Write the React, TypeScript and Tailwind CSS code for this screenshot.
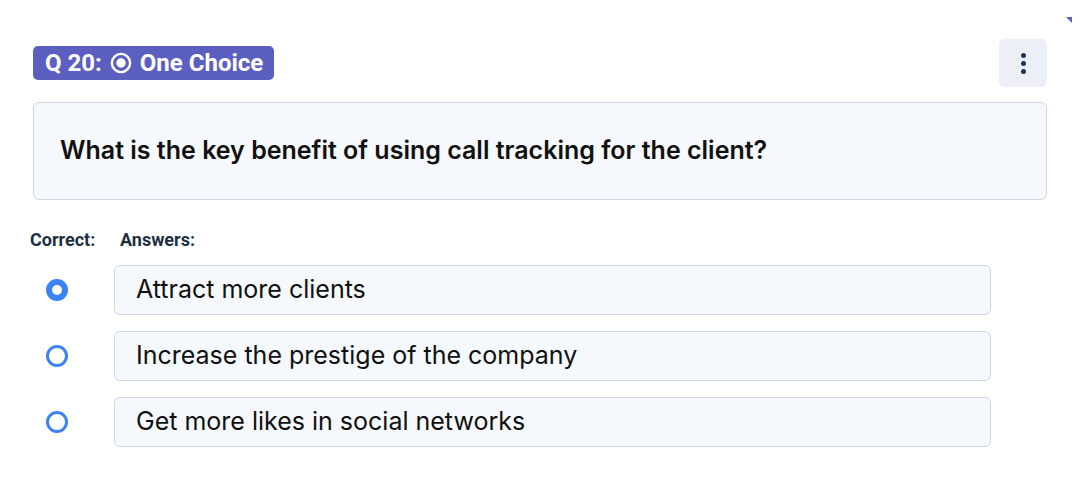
import React, { useState } from 'react';

const answers = [
  'Attract more clients',
  'Increase the prestige of the company',
  'Get more likes in social networks',
];

function Radio({ checked }: { checked: boolean }) {
  return (
    <span
      className={`block w-[22px] h-[22px] rounded-full bg-white ${
        checked ? 'border-[6px] border-[#3b82f6]' : 'border-[3px] border-[#3b82f6]'
      }`}
    />
  );
}

export default function App() {
  const [correct, setCorrect] = useState(0);

  return (
    <div className="relative min-h-[494px] bg-white pl-[33px] pr-[39px] pt-[39px] font-['Inter',sans-serif]">
      {/* little corner marker */}
      <span className="absolute right-[14px] top-[17px] w-0 h-0 border-l-[6px] border-l-transparent border-t-[6px] border-t-[#5b5fc0]" />

      <div className="flex items-center justify-between h-12">
        <div className="flex items-center gap-[8px] h-[34px] pl-3 pr-[11px] rounded-[5px] bg-[#5b5fc0] text-white font-['Roboto',sans-serif] font-bold text-[24px] leading-none">
          <span>Q 20:</span>
          <svg width="22" height="22" viewBox="0 0 20 20">
            <circle cx="10" cy="10" r="8.3" fill="none" stroke="white" strokeWidth="2.2" />
            <circle cx="10" cy="10" r="4.3" fill="white" />
          </svg>
          <span>One Choice</span>
        </div>
        <button className="w-12 h-12 rounded-md bg-[#eceff6] flex flex-col items-center justify-center gap-[3px]">
          <span className="w-[5px] h-[5px] rounded-full bg-[#1e3656]" />
          <span className="w-[5px] h-[5px] rounded-full bg-[#1e3656]" />
          <span className="w-[5px] h-[5px] rounded-full bg-[#1e3656]" />
        </button>
      </div>

      <div className="mt-[15px] h-[98px] flex items-center pl-[26px] rounded-md border border-[#cfd6e0] bg-[#f5f8fc]">
        <p className="text-[25px] font-semibold text-[#111]">
          What is the key benefit of using call tracking for the client?
        </p>
      </div>

      <div className="mt-[29px] flex ml-[-3px] font-['Roboto',sans-serif] font-bold text-[18px] leading-[22px] text-[#1f2f42]">
        <span className="w-[90px]">Correct:</span>
        <span>Answers:</span>
      </div>

      <div className="mt-[14px] flex flex-col gap-4 pr-[56px]">
        {answers.map((a, i) => (
          <div key={a} className="flex items-center">
            <button
              className="w-[81px] flex justify-start pl-[13px]"
              onClick={() => setCorrect(i)}
            >
              <Radio checked={correct === i} />
            </button>
            <div className="flex-1 h-[50px] flex items-center pl-[21px] rounded-md border border-[#cfd6e0] bg-[#f5f8fc] text-[25px] text-[#111]">
              {a}
            </div>
          </div>
        ))}
      </div>
    </div>
  );
}
